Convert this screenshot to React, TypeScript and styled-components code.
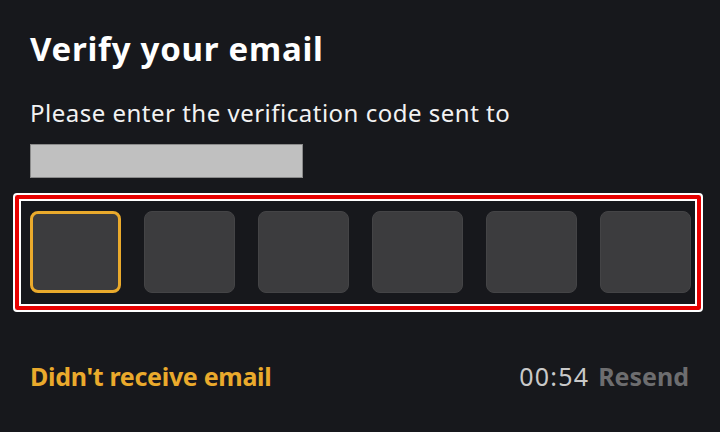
import React from "react";
import styled, { createGlobalStyle } from "styled-components";

const Global = createGlobalStyle`
  html, body { margin: 0; padding: 0; background: #17181c; }
  body { font-family: "Noto Sans", Roboto, Arial, sans-serif; }
`;

const Page = styled.div`
  width: 720px;
  height: 432px;
  box-sizing: border-box;
  padding: 27px 17px 0 13px;
  background: #17181c;
  overflow: hidden;
`;

const Section = styled.div`
  padding-left: 17px;
`;

const Title = styled.h1`
  margin: 0;
  font-size: 33px;
  line-height: 44px;
  font-weight: 700;
  color: #ffffff;
  letter-spacing: 0.75px;
`;

const Subtitle = styled.p`
  margin: 26px 0 0;
  font-size: 24px;
  line-height: 32px;
  font-weight: 400;
  color: #f2f2f2;
  letter-spacing: 0.5px;
`;

const Redacted = styled.div`
  margin-top: 15px;
  width: 273px;
  height: 34px;
  box-sizing: border-box;
  background: #c0c0c0;
  border: 1px solid #8a8a8a;
`;

const Highlight = styled.div`
  margin-top: 15px;
  width: 690px;
  height: 119px;
  box-sizing: border-box;
  border: 2px solid #ffffff;
  border-radius: 4px;
  box-shadow: inset 0 0 0 4px #e60000, inset 0 0 0 6px #ffffff;
  padding: 16px 12px 0 15px;
`;

const CodeRow = styled.div`
  display: grid;
  grid-template-columns: repeat(6, 91px);
  column-gap: 23px;
`;

const CodeBox = styled.div<{ $active?: boolean }>`
  height: 82px;
  box-sizing: border-box;
  border-radius: 8px;
  background: #3c3c3e;
  border: ${(p) => (p.$active ? "3px solid #eaaa2c" : "1px solid #444446")};
`;

const Footer = styled.div`
  margin-top: 47px;
  padding-left: 17px;
  padding-right: 14px;
  display: flex;
  align-items: center;
  justify-content: space-between;
  font-size: 25px;
  line-height: 34px;
`;

const HelpLink = styled.span`
  color: #eaaa2c;
  font-weight: 700;
  letter-spacing: -0.3px;
`;

const TimerGroup = styled.div`
  display: flex;
  gap: 9px;
`;

const Timer = styled.span`
  color: #c9c9c9;
  font-weight: 400;
  letter-spacing: 1.2px;
`;

const Resend = styled.span`
  color: #6d6d6f;
  font-weight: 700;
`;

export default function App() {
  return (
    <>
      <Global />
      <Page>
        <Section>
          <Title>Verify your email</Title>
          <Subtitle>Please enter the verification code sent to</Subtitle>
          <Redacted />
        </Section>
        <Highlight>
          <CodeRow>
            {[0, 1, 2, 3, 4, 5].map((i) => (
              <CodeBox key={i} $active={i === 0} />
            ))}
          </CodeRow>
        </Highlight>
        <Footer>
          <HelpLink>Didn't receive email</HelpLink>
          <TimerGroup>
            <Timer>00:54</Timer>
            <Resend>Resend</Resend>
          </TimerGroup>
        </Footer>
      </Page>
    </>
  );
}
